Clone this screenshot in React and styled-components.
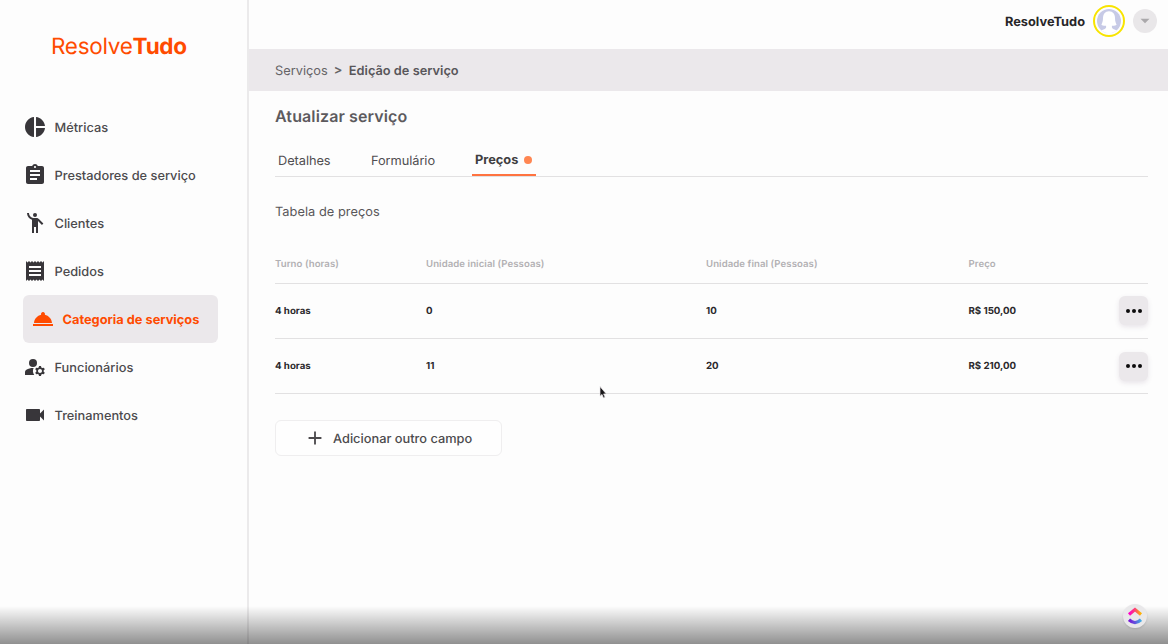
import React from "react";
import styled, { createGlobalStyle } from "styled-components";
import { MdPieChart, MdAssignment, MdEmojiPeople, MdReceipt, MdRoomService, MdVideocam, MdAdd, MdManageAccounts } from "react-icons/md";

const GlobalStyle = createGlobalStyle`
  * { box-sizing: border-box; }
  body { margin: 0; background: #fdfdfd; overflow: hidden; font-family: Inter, "Liberation Sans", sans-serif; color: #403e41; text-rendering: geometricPrecision; }
  button { font: inherit; color: inherit; text-rendering: inherit; }
`;

const Page = styled.div`
  display: flex;
  width: 1168px;
  height: 644px;
  position: relative;
  overflow: hidden;
`;

const Sidebar = styled.aside`
  flex: none;
  width: 249px;
  border-right: 2px solid #ebeaeb;
`;

const Logo = styled.div`
  height: 103px;
  padding: 32px 0 0 51px;
  font-size: 22.5px;
  line-height: 29px;
  font-weight: 400;
  letter-spacing: -0.28px;
  color: #ff4b00;
  white-space: nowrap;
  b { font-weight: 700; }
`;

const Nav = styled.nav`
  display: flex;
  flex-direction: column;
`;

const NavItem = styled.a`
  display: flex;
  align-items: center;
  width: 195px;
  height: 48px;
  margin-left: 22.5px;
  padding-left: ${(p) => (p.$active ? 8 : 0)}px;
  border-radius: 6px;
  background: ${(p) => (p.$active ? "#ebe8eb" : "transparent")};
  color: ${(p) => (p.$active ? "#ff4b00" : "#4c4a4d")};
  font-size: 12.8px;
  font-weight: ${(p) => (p.$active ? 700 : 500)};
  white-space: nowrap;
  svg { flex: none; width: 24px; height: 24px; margin-right: 8px; color: ${(p) => (p.$active ? "#ff4b00" : "#38363a")}; }
`;

const NavLabel = styled.span`
  padding-top: 2px;
`;

const Main = styled.div`
  flex: 1;
  min-width: 0;
`;

const TopBar = styled.header`
  display: flex;
  justify-content: flex-end;
  align-items: center;
  height: 49px;
  padding: 0 11px 6.5px 0;
`;

const UserName = styled.span`
  padding-top: 2px;
  font-size: 12.8px;
  font-weight: 700;
  color: #272528;
`;

const Avatar = styled.div`
  width: 32px;
  height: 32px;
  margin: 0 8px;
  border: 2px solid #f8e400;
  border-radius: 50%;
  svg { display: block; width: 28px; height: 28px; }
`;

const RoundButton = styled.button`
  display: grid;
  place-items: center;
  width: 24px;
  height: 24px;
  padding: 0;
  border: 0;
  border-radius: 50%;
  background: #e9e7e9;
`;

const Breadcrumb = styled.div`
  display: flex;
  align-items: center;
  height: 42px;
  padding: 2px 0 0 26px;
  background: #ebe8eb;
  font-size: 12.8px;
  color: #656366;
  i { font-style: normal; font-weight: 600; margin: -1px 6.5px 0 6px; }
  b { font-weight: 600; color: #58565a; }
`;

const Content = styled.main`
  padding: 14px 20px 0 26px;
`;

const Title = styled.h1`
  margin: 0;
  font-size: 16px;
  line-height: 22px;
  font-weight: 600;
  letter-spacing: 0.12px;
  color: #5c5a5d;
`;

const Tabs = styled.div`
  display: flex;
  height: 50px;
  padding: 18px 0 0 3px;
  border-bottom: 1.5px solid #e2e1e2;
`;

const Tab = styled.div`
  height: 31px;
  width: ${(p) => p.$width}px;
  padding: ${(p) => (p.$active ? "8px 0 0 3px" : "9px 0 0")};
  margin-left: ${(p) => (p.$active ? 1 : 0)}px;
  border-bottom: ${(p) => (p.$active ? "2px solid #ff7340" : "0")};
  font-size: 12.8px;
  line-height: 16px;
  font-weight: ${(p) => (p.$active ? 700 : 400)};
  letter-spacing: ${(p) => (p.$active ? 0 : -0.06)}px;
  color: ${(p) => (p.$active ? "#403e41" : "#504e51")};
  white-space: nowrap;
`;

const Dot = styled.span`
  display: inline-block;
  width: 8px;
  height: 8px;
  margin-left: 6px;
  border-radius: 50%;
  background: #ff8652;
`;

const Subtitle = styled.h2`
  margin: 26.5px 0 -1px;
  font-size: 12.8px;
  line-height: 18px;
  font-weight: 400;
  letter-spacing: 0.04px;
  color: #59575a;
`;

const Row = styled.div`
  display: grid;
  grid-template-columns: 151px 280px 262.5px 1fr 29px;
  align-items: center;
  height: ${(p) => (p.$head ? 63 : 55.3)}px;
  padding-top: ${(p) => (p.$head ? 25 : 0.5)}px;
  border-bottom: 1.5px solid #e2e1e2;
  font-size: ${(p) => (p.$head ? 9.6 : 9.7)}px;
  font-weight: ${(p) => (p.$head ? 600 : 700)};
  letter-spacing: ${(p) => (p.$head ? 0.07 : 0)}px;
  color: ${(p) => (p.$head ? "#b2b0b3" : "#2b292c")};
`;

const Cell = styled.span`
  padding-top: 1.5px;
`;

const MoreButton = styled.button`
  display: flex;
  justify-content: center;
  align-items: center;
  gap: 2px;
  width: 29px;
  height: 29px;
  padding: 0;
  border: 0;
  border-radius: 6px;
  background: #ebe8eb;
  box-shadow: 0 2px 5px rgba(90, 60, 100, 0.13);
  span { width: 4px; height: 4px; border-radius: 50%; background: #0d0c0d; }
`;

const AddButton = styled.button`
  display: flex;
  align-items: center;
  width: 226.5px;
  height: 36px;
  margin-top: 26px;
  padding: 0 0 0 28px;
  border: 1px solid #efeeef;
  border-radius: 6px;
  background: #fefefe;
  font-size: 12.8px;
  font-weight: 500;
  color: #4c4a4d;
  svg { width: 22px; height: 22px; margin-right: 7px; }
  span { padding-top: 2px; }
`;

const BottomShade = styled.div`
  position: absolute;
  inset: auto 0 0 0;
  height: 38px;
  background: linear-gradient(rgba(0, 0, 0, 0), rgba(0, 0, 0, 0.43));
`;

const Badge = styled.div`
  position: absolute;
  left: 1123px;
  top: 604px;
  width: 24px;
  height: 24px;
  border-radius: 50%;
  background: #e9e8ea;
  box-shadow: 0 1px 2px rgba(0, 0, 0, 0.12);
  svg { display: block; }
`;

const Cursor = styled.svg`
  position: absolute;
  left: 599px;
  top: 386px;
`;

const navItems = [
  { label: "Métricas", icon: MdPieChart },
  { label: "Prestadores de serviço", icon: MdAssignment },
  { label: "Clientes", icon: MdEmojiPeople },
  { label: "Pedidos", icon: MdReceipt },
  { label: "Categoria de serviços", icon: MdRoomService, active: true },
  { label: "Funcionários", icon: MdManageAccounts },
  { label: "Treinamentos", icon: MdVideocam },
];

const prices = [
  ["4 horas", "0", "10", "R$ 150,00"],
  ["4 horas", "11", "20", "R$ 210,00"],
];

export default function App() {
  return (
    <>
      <GlobalStyle />
      <Page>
        <Sidebar>
          <Logo>Resolve<b>Tudo</b></Logo>
          <Nav>
            {navItems.map(({ label, icon: Icon, active }) => (
              <NavItem key={label} $active={active}>
                <Icon />
                <NavLabel>{label}</NavLabel>
              </NavItem>
            ))}
          </Nav>
        </Sidebar>
        <Main>
          <TopBar>
            <UserName>ResolveTudo</UserName>
            <Avatar>
              <svg viewBox="0 0 28 28">
                <circle cx="14" cy="14" r="12" fill="#c7cae6" />
                <path d="M14 4.200c-4 0-6 3-6 6.800 0 3.500-.9 5-1.600 6.700 1 .9 2.600 1.100 4.700 1v1.700c-.4 1.500-3 2-4.600 3C8.500 25 11 26 14 26s5.500-1 7.500-2.600c-1.600-1-4.200-1.500-4.600-3v-1.700c2.100.1 3.700-.1 4.700-1-.7-1.700-1.600-3.200-1.600-6.700 0-3.800-2-6.800-6-6.800z" fill="#fff" />
              </svg>
            </Avatar>
            <RoundButton>
              <svg width="10" height="6" viewBox="0 0 10 6"><path d="M.5.8h9L5 5.300z" fill="#aaa8ab" /></svg>
            </RoundButton>
          </TopBar>
          <Breadcrumb>Serviços<i>&gt;</i><b>Edição de serviço</b></Breadcrumb>
          <Content>
            <Title>Atualizar serviço</Title>
            <Tabs>
              <Tab $width={93}>Detalhes</Tab>
              <Tab $width={100}>Formulário</Tab>
              <Tab $width={64} $active>Preços<Dot /></Tab>
            </Tabs>
            <Subtitle>Tabela de preços</Subtitle>
            <Row $head>
              <span>Turno (horas)</span>
              <span>Unidade inicial (Pessoas)</span>
              <span>Unidade final (Pessoas)</span>
              <span>Preço</span>
            </Row>
            {prices.map((cells, n) => (
              <Row key={n}>
                {cells.map((c, i) => <Cell key={i}>{c}</Cell>)}
                <MoreButton><span /><span /><span /></MoreButton>
              </Row>
            ))}
            <AddButton><MdAdd /><span>Adicionar outro campo</span></AddButton>
          </Content>
        </Main>
        <Cursor width="8" height="13" viewBox="0 0 8 13">
          <path d="M1 .6v9.600l2-1.800 1.500 3.600 1.600-.7-1.500-3.400h2.700z" fill="#171518" stroke="#e9e7ea" strokeWidth=".7" />
        </Cursor>
        <BottomShade />
        <Badge>
          <svg width="24" height="24" viewBox="0 0 24 24" fill="none" strokeWidth="3.200">
            <defs>
              <linearGradient id="roof"><stop stopColor="#f0c" /><stop offset=".5" stopColor="#fb4370" /><stop offset="1" stopColor="#ffb800" /></linearGradient>
              <linearGradient id="smile"><stop stopColor="#7612d8" /><stop offset=".5" stopColor="#6554dc" /><stop offset="1" stopColor="#40aee6" /></linearGradient>
            </defs>
            <path d="M6 10.600L12 5.600l6 5" stroke="url(#roof)" />
            <path d="M6 15.800q6 5.500 12 0" stroke="url(#smile)" />
          </svg>
        </Badge>
      </Page>
    </>
  );
}
